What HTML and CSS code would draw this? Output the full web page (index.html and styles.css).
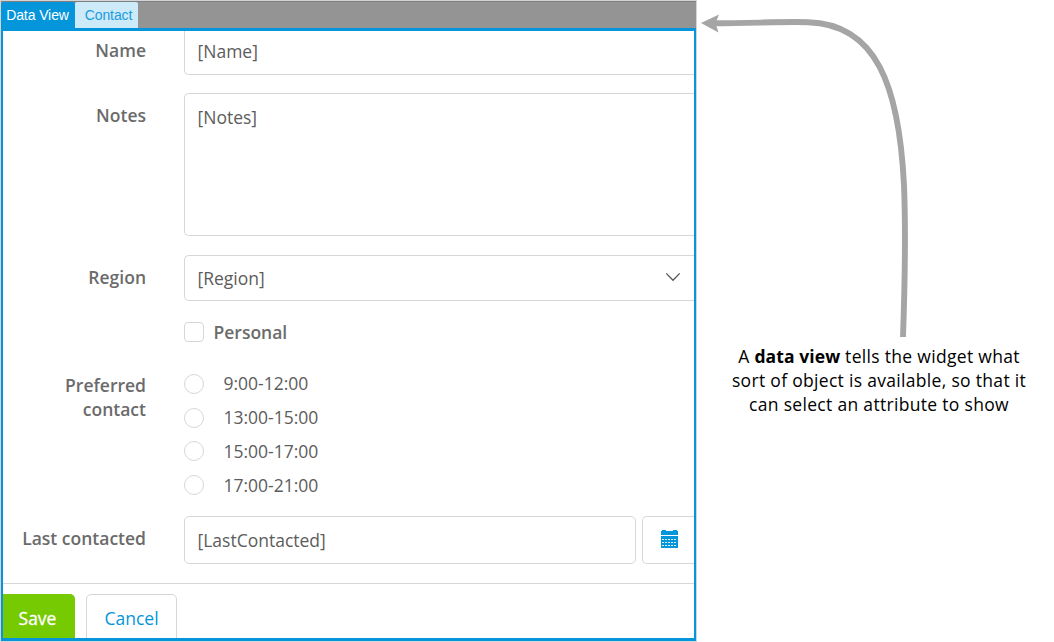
FILE: index.html
```html
<!DOCTYPE html>
<html lang="en">
<head>
<meta charset="utf-8">
<title>Data view</title>
<link rel="stylesheet" href="styles.css">
</head>
<body>
<main class="page">
  <section class="panel">
    <div class="tabs">
      <span class="tab tab-active">Data View</span>
      <span class="tab tab-entity">Contact</span>
    </div>
    <div class="view">
      <div class="row row-name"><label class="label">Name</label><div class="field field-name">[Name]</div></div>
      <div class="row row-notes"><label class="label">Notes</label><div class="field field-notes">[Notes]</div></div>
      <div class="row row-region"><label class="label">Region</label>
        <div class="field field-region"><span>[Region]</span>
          <svg class="chevron" width="16" height="10" viewBox="0 0 16 10"><path d="M1.3 1.4 8 8.2 14.7 1.4" fill="none" stroke="#555" stroke-width="1.3"/></svg>
        </div>
      </div>
      <div class="row row-personal"><span></span><div class="check"><span class="box"></span><span class="check-text">Personal</span></div></div>
      <div class="row row-contact"><label class="label">Preferred<br>contact</label>
        <div class="radios">
          <div class="option"><span class="radio"></span><span class="option-text">9:00-12:00</span></div>
          <div class="option"><span class="radio"></span><span class="option-text">13:00-15:00</span></div>
          <div class="option"><span class="radio"></span><span class="option-text">15:00-17:00</span></div>
          <div class="option"><span class="radio"></span><span class="option-text">17:00-21:00</span></div>
        </div>
      </div>
      <div class="row row-date"><label class="label">Last contacted</label>
        <div class="date">
          <div class="field field-date">[LastContacted]</div>
          <div class="date-button">
            <svg width="17" height="18" viewBox="0 0 17 18">
              <path d="M0 1h1V0h4v1h7V0h4v1h1v4H0zM0 6h17v12H0z" fill="#0595db"/>
              <path d="M1 9.5h15M1 12.5h15M1 15.5h15" stroke="#fff" stroke-opacity=".85" stroke-width="1" stroke-dasharray="2 1"/>
            </svg>
          </div>
        </div>
      </div>
      <div class="actions"><span class="button save">Save</span><span class="button cancel">Cancel</span></div>
    </div>
  </section>
  <aside class="note">
    <svg class="arrow" width="220" height="340" viewBox="697 0 220 340">
      <path d="M903 337C905 280 906 235 904 185C899 85 876 24 808 22.200C780 21.500 752 23.300 714 23.300" fill="none" stroke="#a5a5a5" stroke-width="5.900"/>
      <path d="M701 23 719 14.500 715.500 23.300 718.500 32.500Z" fill="#a5a5a5"/>
    </svg>
    <p class="note-text">A <b>data view</b> tells the widget what<br>sort of object is available, so that it<br>can select an attribute to show</p>
  </aside>
</main>
</body>
</html>
```
FILE: styles.css
```css
* { box-sizing: border-box; }
body { margin: 0; background: #fff; font-family: "Open Sans", "Noto Sans", sans-serif; }
.page { display: flex; width: 1054px; height: 642px; overflow: hidden; }
.panel { width: 697px; height: 642px; flex: none; border: 1px solid #d2d5d7; display: flex; flex-direction: column; }
.tabs { height: 27px; background: #949494; border-top: 1px solid #808080; display: flex; flex: none; font: 14px/26px "Liberation Sans", Arial, sans-serif; }
.tab { height: 26px; text-align: center; white-space: nowrap; border-radius: 2px 2px 0 0; }
.tab-active { width: 74px; background: #0595db; color: #fff; padding-right: 1px; letter-spacing: -.1px; }
.tab-entity { width: 63px; background: #cdeaf8; color: #1b9cdd; padding-left: 4px; letter-spacing: -.1px; }
.view { flex: 1; border: 2px solid #0595db; border-width: 3px 2px; overflow: hidden; font-size: 17.5px; line-height: 24px; color: #5c5c5c; }
.row { display: grid; grid-template-columns: 143px 510px; column-gap: 38px; }
.label { text-align: right; font-weight: 600; color: #6b6b6b; white-space: nowrap; }
.field { border: 1px solid #d7d7d7; border-radius: 5px; padding-left: 12.5px; }
.row > .field { border-right: 0; border-radius: 5px 0 0 5px; }
.row-name { height: 62px; }
.row-name .label { padding-top: 7px; }
.field-name { height: 44px; border-top: 0; padding-top: 8px; }
.row > .field-name { border-radius: 0 0 0 5px; }
.row-notes { height: 162px; }
.row-notes .label { padding-top: 10px; }
.field-notes { height: 143px; padding-top: 11px; }
.row-region { height: 67px; }
.row-region .label { padding-top: 10px; }
.field-region { height: 46px; display: flex; justify-content: space-between; align-items: center; padding-right: 13px; }
.chevron { display: block; margin-top: -2px; }
.row-personal { height: 52px; }
.check { display: flex; gap: 9.5px; height: 20px; align-items: center; }
.box { width: 20px; height: 20px; border: 1px solid #d7d7d7; border-radius: 4px; }
.check-text { font-weight: 600; color: #6b6b6b; }
.row-contact { height: 142px; }
.row-contact .label { margin-top: -1px; }
.radios { display: grid; grid-auto-rows: 34px 33px 34px 34px; align-content: start; }
.option { display: flex; gap: 19.5px; height: 20px; align-items: center; }
.option-text { margin-top: -2px; }
.option:nth-child(n+3) .option-text { margin-top: 0; }
.radio { width: 20px; height: 20px; border: 1px solid #d7d7d7; border-radius: 50%; }
.row-date { height: 67px; }
.row-date .label { padding-top: 10px; }
.date { display: flex; gap: 6px; }
.field-date { width: 452px; height: 48px; flex: none; padding-top: 11px; }
.date-button { width: 52px; flex: none; height: 48px; border: 1px solid #d7d7d7; border-right: 0; border-radius: 5px 0 0 5px; padding: 13px 0 0 18px; }
.date-button svg { display: block; }
.actions { border-top: 1px solid #d7d7d7; height: 60px; padding-top: 10px; display: flex; gap: 11px; }
.button { height: 52px; text-align: center; padding-top: 12px; border-radius: 5px; }
.save { width: 72px; background: #76ca02; color: #fff; border-radius: 0 5px 5px 0; padding-right: 3px; -webkit-text-stroke: .3px #fff; }
.cancel { width: 91px; border: 1px solid #d7d7d7; color: #0595db; padding-top: 11px; }
.note { width: 357px; flex: none; }
.arrow { display: block; }
.note-text { margin: 4px 0 0 4px; width: 356px; text-align: center; font-size: 17.5px; line-height: 24px; letter-spacing: .31px; color: #000; white-space: nowrap; }
.note-text b { letter-spacing: .1px; }
```
